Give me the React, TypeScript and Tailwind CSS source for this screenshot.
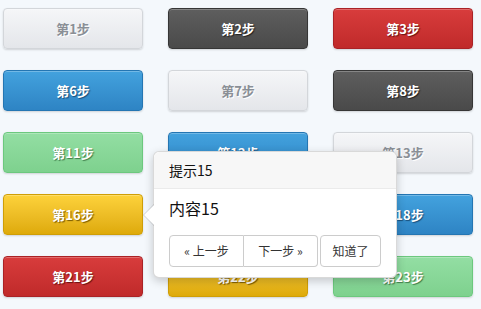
const steps = [
  { n: 1, c: 'gray' },
  { n: 2, c: 'dark' },
  { n: 3, c: 'red' },
  { n: 6, c: 'blue' },
  { n: 7, c: 'gray' },
  { n: 8, c: 'dark' },
  { n: 11, c: 'green' },
  { n: 12, c: 'blue' },
  { n: 13, c: 'gray' },
  { n: 16, c: 'yellow' },
  { n: 17, c: 'green' },
  { n: 18, c: 'blue' },
  { n: 21, c: 'red' },
  { n: 22, c: 'yellow' },
  { n: 23, c: 'green' },
];

const styles: Record<string, string> = {
  gray: 'bg-gradient-to-b from-[#f5f6f8] to-[#e4e6ea] border-[#d3d6da] text-[#8a8f96] [text-shadow:1px_1px_0_#fff]',
  dark: 'bg-gradient-to-b from-[#5e5e5e] to-[#4a4a4a] border-[#363636] text-white [text-shadow:1px_1px_1px_#222]',
  red: 'bg-gradient-to-b from-[#d83c3c] to-[#c02a2a] border-[#aa2226] text-white [text-shadow:1px_1px_1px_#6a1212]',
  blue: 'bg-gradient-to-b from-[#43a2de] to-[#2e84c4] border-[#2476b3] text-white [text-shadow:1px_1px_1px_#1a4f7a]',
  green: 'bg-gradient-to-b from-[#93dea3] to-[#7ed18e] border-[#6cc87e] text-white [text-shadow:1px_1px_1px_#3f7c4a]',
  yellow: 'bg-gradient-to-b from-[#fdd23a] to-[#deaa08] border-[#cf9e06] text-white [text-shadow:1px_1px_1px_#7a5a00]',
};

export default function App() {
  return (
    <div className="relative w-[481px] h-[309px] overflow-hidden bg-[#f4f8fc] font-['Noto_Sans_CJK_SC',sans-serif]">
      {/* Step buttons */}
      <div className="grid grid-cols-[140px_140px_140px] gap-x-[25px] gap-y-[21px] pl-[3px] pt-[8px]">
        {steps.map((s) => (
          <button
            key={s.n}
            className={`h-[41px] rounded-[4px] border text-[13px] font-bold shadow-[inset_0_1px_0_rgba(255,255,255,0.25),0_1px_2px_rgba(0,0,0,0.15)] ${styles[s.c]}`}
          >
            第{s.n}步
          </button>
        ))}
      </div>

      {/* Popover */}
      <div className="absolute left-[153px] top-[151px] w-[244px] h-[127px] bg-white rounded-[6px] border border-black/15 shadow-[0_3px_10px_rgba(0,0,0,0.2)]">
        <div className="absolute -left-[11px] top-[52px] w-0 h-0 border-y-[11px] border-y-transparent border-r-[11px] border-r-black/15" />
        <div className="absolute -left-[10px] top-[53px] w-0 h-0 border-y-[10px] border-y-transparent border-r-[10px] border-r-white" />
        <div className="h-[37px] flex items-center px-[15px] bg-[#f7f7f7] border-b border-[#ebebeb] rounded-t-[6px] text-[14px] text-[#111]">
          提示15
        </div>
        <div className="px-[15px] pt-[8px]">
          <div className="text-[16px] leading-[22px] text-[#111]">内容15</div>
          <div className="flex gap-[2px] mt-[16px] text-[12px] text-[#333]">
            <div className="flex">
              <button className="w-[75px] h-[32px] border border-[#ccc] rounded-l-[4px] bg-white">« 上一步</button>
              <button className="w-[74px] h-[32px] border border-l-0 border-[#ccc] rounded-r-[4px] bg-white">下一步 »</button>
            </div>
            <button className="w-[62px] h-[32px] border border-[#ccc] rounded-[4px] bg-white">知道了</button>
          </div>
        </div>
      </div>
    </div>
  );
}
